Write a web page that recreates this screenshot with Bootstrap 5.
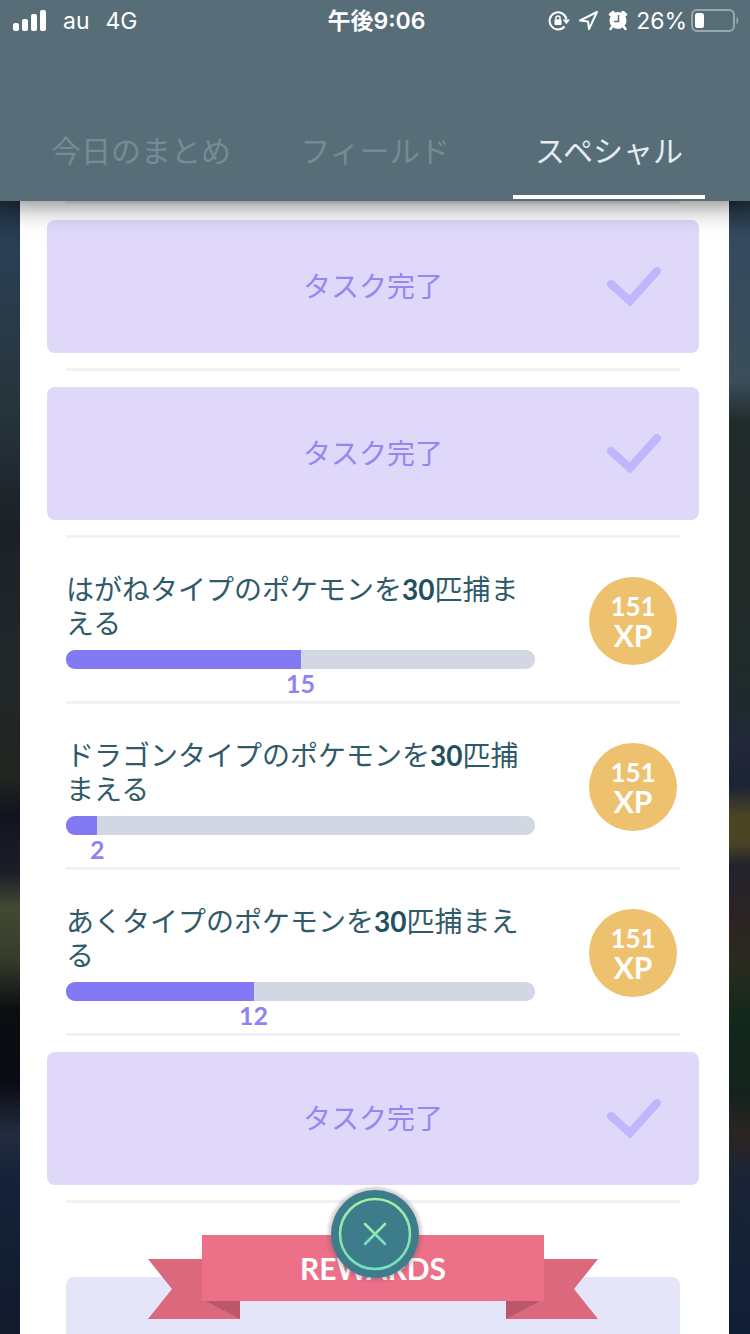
<!DOCTYPE html>
<html lang="ja">
<head>
<meta charset="utf-8">
<meta name="viewport" content="width=device-width, initial-scale=1">
<title>スペシャルリサーチ</title>
<link href="https://cdn.jsdelivr.net/npm/bootstrap@5.3.0/dist/css/bootstrap.min.css" rel="stylesheet">
<style>
  body {
    font-family: Lato, "Noto Sans CJK JP", sans-serif;
    background-color: #161e2c;
    overflow-x: hidden;
  }
  /* blurred night scene, left and right of the sheet */
  .scene {
    background:
      linear-gradient(#1f2f3f 0, #1f2f3f 201px, #2b4055 243px, #26333a 417px, #1b2127 525px, #22282a 670px, #20251f 778px, #11131f 815px, #1c1e26 872px, #434a33 908px, #353b2a 960px, #0c0d12 1010px, #0a0b12 1082px, #222c3e 1133px, #152238 1180px, #121a2c 100%) left / 50% 100% no-repeat,
      linear-gradient(#20303f 0, #20303f 201px, #344a5e 236px, #3a4d5a 381px, #202a2a 424px, #232b27 562px, #1d2a2c 706px, #23283a 742px, #1b2335 785px, #4a4425 815px, #4a4425 843px, #22222e 865px, #2c2422 923px, #292b1f 966px, #12281b 1017px, #14221c 1097px, #2c2522 1133px, #1a2436 1176px, #101e35 100%) right / 50% 100% no-repeat;
  }
  .top-bar { background: #576e78; box-shadow: 0 0 28px rgba(0, 0, 0, .65); z-index: 10; }
  .status { height: 42px; font: 400 23px/40px Inter, "Noto Sans CJK JP", sans-serif; padding: 0 10px 0 13px; }
  .status-time { font-weight: 600; }
  .tabs { padding: 58px 24px 2px; }
  .tab-link {
    margin: 0 21px;
    height: 99px;
    padding-top: 28px;
    border-bottom: 4px solid transparent;
    font-size: 30px;
    line-height: 44px;
    color: #768b95;
    white-space: nowrap;
    text-decoration: none;
  }
  .tab-link.active { color: #e6eaf2; border-color: #fff; }
  .sheet { margin: 0 21px 0 20px; padding: 0 30px 0 27px; background: #fff; }
  .rule { height: 3px; margin: 0 19px; background: #f0f1f5; }
  .done {
    height: 133px;
    margin: 16px 0 15px;
    padding-bottom: 2px;
    border-radius: 8px;
    background: #dfd8f9;
    color: #9587f2;
    font-size: 28px;
  }
  .done svg { right: 37px; }
  .quest { padding: 34px 22px 3px 19px; }
  .quest-title { font-size: 28px; line-height: 34px; color: #2f5a69; }
  .quest-title b { font-weight: 700; color: #23505f; }
  .quest-body { max-width: 469px; }
  .quest .progress { height: 19px; margin-top: 10px; border-radius: 9px; background: #d3d7e4; }
  .quest .progress-bar { background: #8479f5; }
  .count { width: 0; font-size: 25px; line-height: 29px; font-weight: 700; color: #8f82f3; }
  .xp {
    width: 88px;
    height: 88px;
    margin-top: 5px;
    border-radius: 50%;
    background: #edc16d;
    color: #fff;
    font-size: 26px;
    line-height: 29px;
    font-weight: 700;
  }
  .xp span + span { font-size: 30px; }
  .ribbon { width: 450px; height: 84px; margin: 32px auto -42px; z-index: 1; }
  .ribbon h2 { height: 66px; font-size: 30px; line-height: 67px; font-weight: 700; color: #fff; }
  .reward-panel { min-height: 56px; margin: 0 19px; border-radius: 8px 8px 0 0; background: #e4e5f9; }
  .close-btn {
    width: 88px;
    height: 88px;
    bottom: 56px;
    border-radius: 50%;
    background: #3d7d8b;
    box-shadow: 0 0 3px 3px rgba(90, 80, 90, .25);
    z-index: 20;
  }
</style>
</head>
<body>
<div class="scene min-vh-100 d-flex flex-column">

  <header class="top-bar sticky-top">
    <div class="status d-flex align-items-center text-white">
      <div class="d-flex align-items-center flex-fill w-100">
        <svg width="34" height="22" viewBox="0 0 34 22" fill="#fff" aria-hidden="true">
          <rect x="0" y="13" width="6" height="8" rx="2"/><rect x="9" y="9" width="6" height="12" rx="2"/><rect x="18" y="4" width="6" height="17" rx="2"/><rect x="27" y="0" width="6" height="21" rx="2"/>
        </svg>
        <span class="ms-3 me-3">au</span><span>4G</span>
      </div>
      <div class="status-time text-nowrap">午後9:06</div>
      <div class="d-flex align-items-center justify-content-end flex-fill w-100">
        <svg width="22" height="22" viewBox="0 0 22 22" fill="none" stroke="#fff" stroke-width="2" aria-hidden="true">
          <path d="M16.500 16.500A8.500 8.500 0 1 1 18.400 9"/><path d="M14.800 9.500H22l-3.600 4.800z" fill="#fff" stroke="none"/>
          <rect x="6.500" y="9.500" width="7" height="5.500" rx="1" fill="#fff" stroke="none"/><path d="M8 10V8a2 2 0 0 1 4 0v2" stroke-width="1.500"/>
        </svg>
        <svg class="ms-2" width="22" height="22" viewBox="0 0 22 22" fill="none" stroke="#fff" stroke-width="2" stroke-linejoin="round" aria-hidden="true"><path d="M19 2 2 10.500l8 1 1 7.500z"/></svg>
        <svg class="ms-2" width="20" height="22" viewBox="0 0 20 22" aria-hidden="true">
          <circle cx="10" cy="10.500" r="8.500" fill="#fff"/><path d="M2.500 4.500 5 2.500M17.500 4.500 15 2.500" stroke="#fff" stroke-width="3.500" stroke-linecap="round"/><path d="m4 17-1.500 2M16 17l1.500 2" stroke="#fff" stroke-width="2.500" stroke-linecap="round"/><path d="M10.500 5v6.500H6" stroke="#576e78" stroke-width="1.500" fill="none"/>
        </svg>
        <span class="ms-2 me-1">26%</span>
        <svg width="49" height="24" viewBox="0 0 49 24" aria-hidden="true">
          <rect x="1" y="1" width="42" height="21" rx="5" fill="none" stroke="#9aa8ae" stroke-width="2"/><rect x="4" y="4" width="9" height="15" rx="2.500" fill="#fff"/><path d="M45.500 8c2.500 1 2.500 6 0 7z" fill="#9aa8ae"/>
        </svg>
      </div>
    </div>
    <nav class="tabs row g-0 text-center">
      <div class="col-4 d-grid"><a class="tab-link" href="#today">今日のまとめ</a></div>
      <div class="col-4 d-grid"><a class="tab-link" href="#field">フィールド</a></div>
      <div class="col-4 d-grid"><a class="tab-link active" href="#special" aria-current="page">スペシャル</a></div>
    </nav>
  </header>

  <main class="sheet flex-grow-1 d-flex flex-column" id="special">
    <div class="rule"></div>
    <div class="done position-relative d-flex align-items-center justify-content-center">タスク完了
      <svg class="position-absolute" width="58" height="42" viewBox="0 0 58 42" fill="none" stroke="#bfb6fb" stroke-width="8" stroke-linecap="round" aria-hidden="true"><path d="m7 19 19 17L53 6"/></svg>
    </div>
    <div class="rule"></div>
    <div class="done position-relative d-flex align-items-center justify-content-center">タスク完了
      <svg class="position-absolute" width="58" height="42" viewBox="0 0 58 42" fill="none" stroke="#bfb6fb" stroke-width="8" stroke-linecap="round" aria-hidden="true"><path d="m7 19 19 17L53 6"/></svg>
    </div>
    <div class="rule"></div>

    <section class="quest d-flex justify-content-between">
      <div class="quest-body flex-grow-1">
        <div class="quest-title">はがねタイプのポケモンを<b>30</b>匹捕まえる</div>
        <div class="progress" role="progressbar" aria-label="はがねタイプ" aria-valuenow="15" aria-valuemin="0" aria-valuemax="30"><div class="progress-bar" style="width: 50%"></div></div>
        <div class="d-flex justify-content-end" style="width: 50%"><div class="count d-flex justify-content-center">15</div></div>
      </div>
      <div class="xp flex-shrink-0 d-flex flex-column align-items-center justify-content-center"><span>151</span><span>XP</span></div>
    </section>
    <div class="rule"></div>

    <section class="quest d-flex justify-content-between">
      <div class="quest-body flex-grow-1">
        <div class="quest-title">ドラゴンタイプのポケモンを<b>30</b>匹捕まえる</div>
        <div class="progress" role="progressbar" aria-label="ドラゴンタイプ" aria-valuenow="2" aria-valuemin="0" aria-valuemax="30"><div class="progress-bar" style="width: 6.67%"></div></div>
        <div class="d-flex justify-content-end" style="width: 6.67%"><div class="count d-flex justify-content-center">2</div></div>
      </div>
      <div class="xp flex-shrink-0 d-flex flex-column align-items-center justify-content-center"><span>151</span><span>XP</span></div>
    </section>
    <div class="rule"></div>

    <section class="quest d-flex justify-content-between">
      <div class="quest-body flex-grow-1">
        <div class="quest-title">あくタイプのポケモンを<b>30</b>匹捕まえる</div>
        <div class="progress" role="progressbar" aria-label="あくタイプ" aria-valuenow="12" aria-valuemin="0" aria-valuemax="30"><div class="progress-bar" style="width: 40%"></div></div>
        <div class="d-flex justify-content-end" style="width: 40%"><div class="count d-flex justify-content-center">12</div></div>
      </div>
      <div class="xp flex-shrink-0 d-flex flex-column align-items-center justify-content-center"><span>151</span><span>XP</span></div>
    </section>
    <div class="rule"></div>

    <div class="done position-relative d-flex align-items-center justify-content-center">タスク完了
      <svg class="position-absolute" width="58" height="42" viewBox="0 0 58 42" fill="none" stroke="#bfb6fb" stroke-width="8" stroke-linecap="round" aria-hidden="true"><path d="m7 19 19 17L53 6"/></svg>
    </div>
    <div class="rule"></div>

    <div class="ribbon position-relative text-center">
      <svg class="position-absolute top-0 start-0" width="450" height="84" viewBox="0 0 450 84" aria-hidden="true">
        <path d="M0 24h92v60H0l24-30zM450 24h-92v60h92l-24-30z" fill="#dc687d"/>
        <path d="M58 66h34v18zM392 66h-34v18z" fill="#bb5769"/>
        <path d="M54 0h342v66H54z" fill="#ec7087"/>
      </svg>
      <h2 class="position-relative m-0">REWARDS</h2>
    </div>
    <div class="reward-panel flex-grow-1"></div>
  </main>

  <button type="button" class="close-btn position-fixed start-50 translate-middle-x border-0 p-0" aria-label="閉じる">
    <svg class="d-block" width="88" height="88" viewBox="0 0 88 88" fill="none" stroke-linecap="round" aria-hidden="true">
      <defs><linearGradient id="mint" x1="0" y1="0" x2="0" y2="1"><stop offset="0" stop-color="#a5efa2"/><stop offset="1" stop-color="#74dfc4"/></linearGradient></defs>
      <circle cx="44" cy="44" r="35" stroke="url(#mint)" stroke-width="2.500"/>
      <path d="m34 34 20 20M54 34 34 54" stroke="url(#mint)" stroke-width="2.500"/>
    </svg>
  </button>
</div>
<script src="https://cdn.jsdelivr.net/npm/bootstrap@5.3.0/dist/js/bootstrap.bundle.min.js"></script>
</body>
</html>
